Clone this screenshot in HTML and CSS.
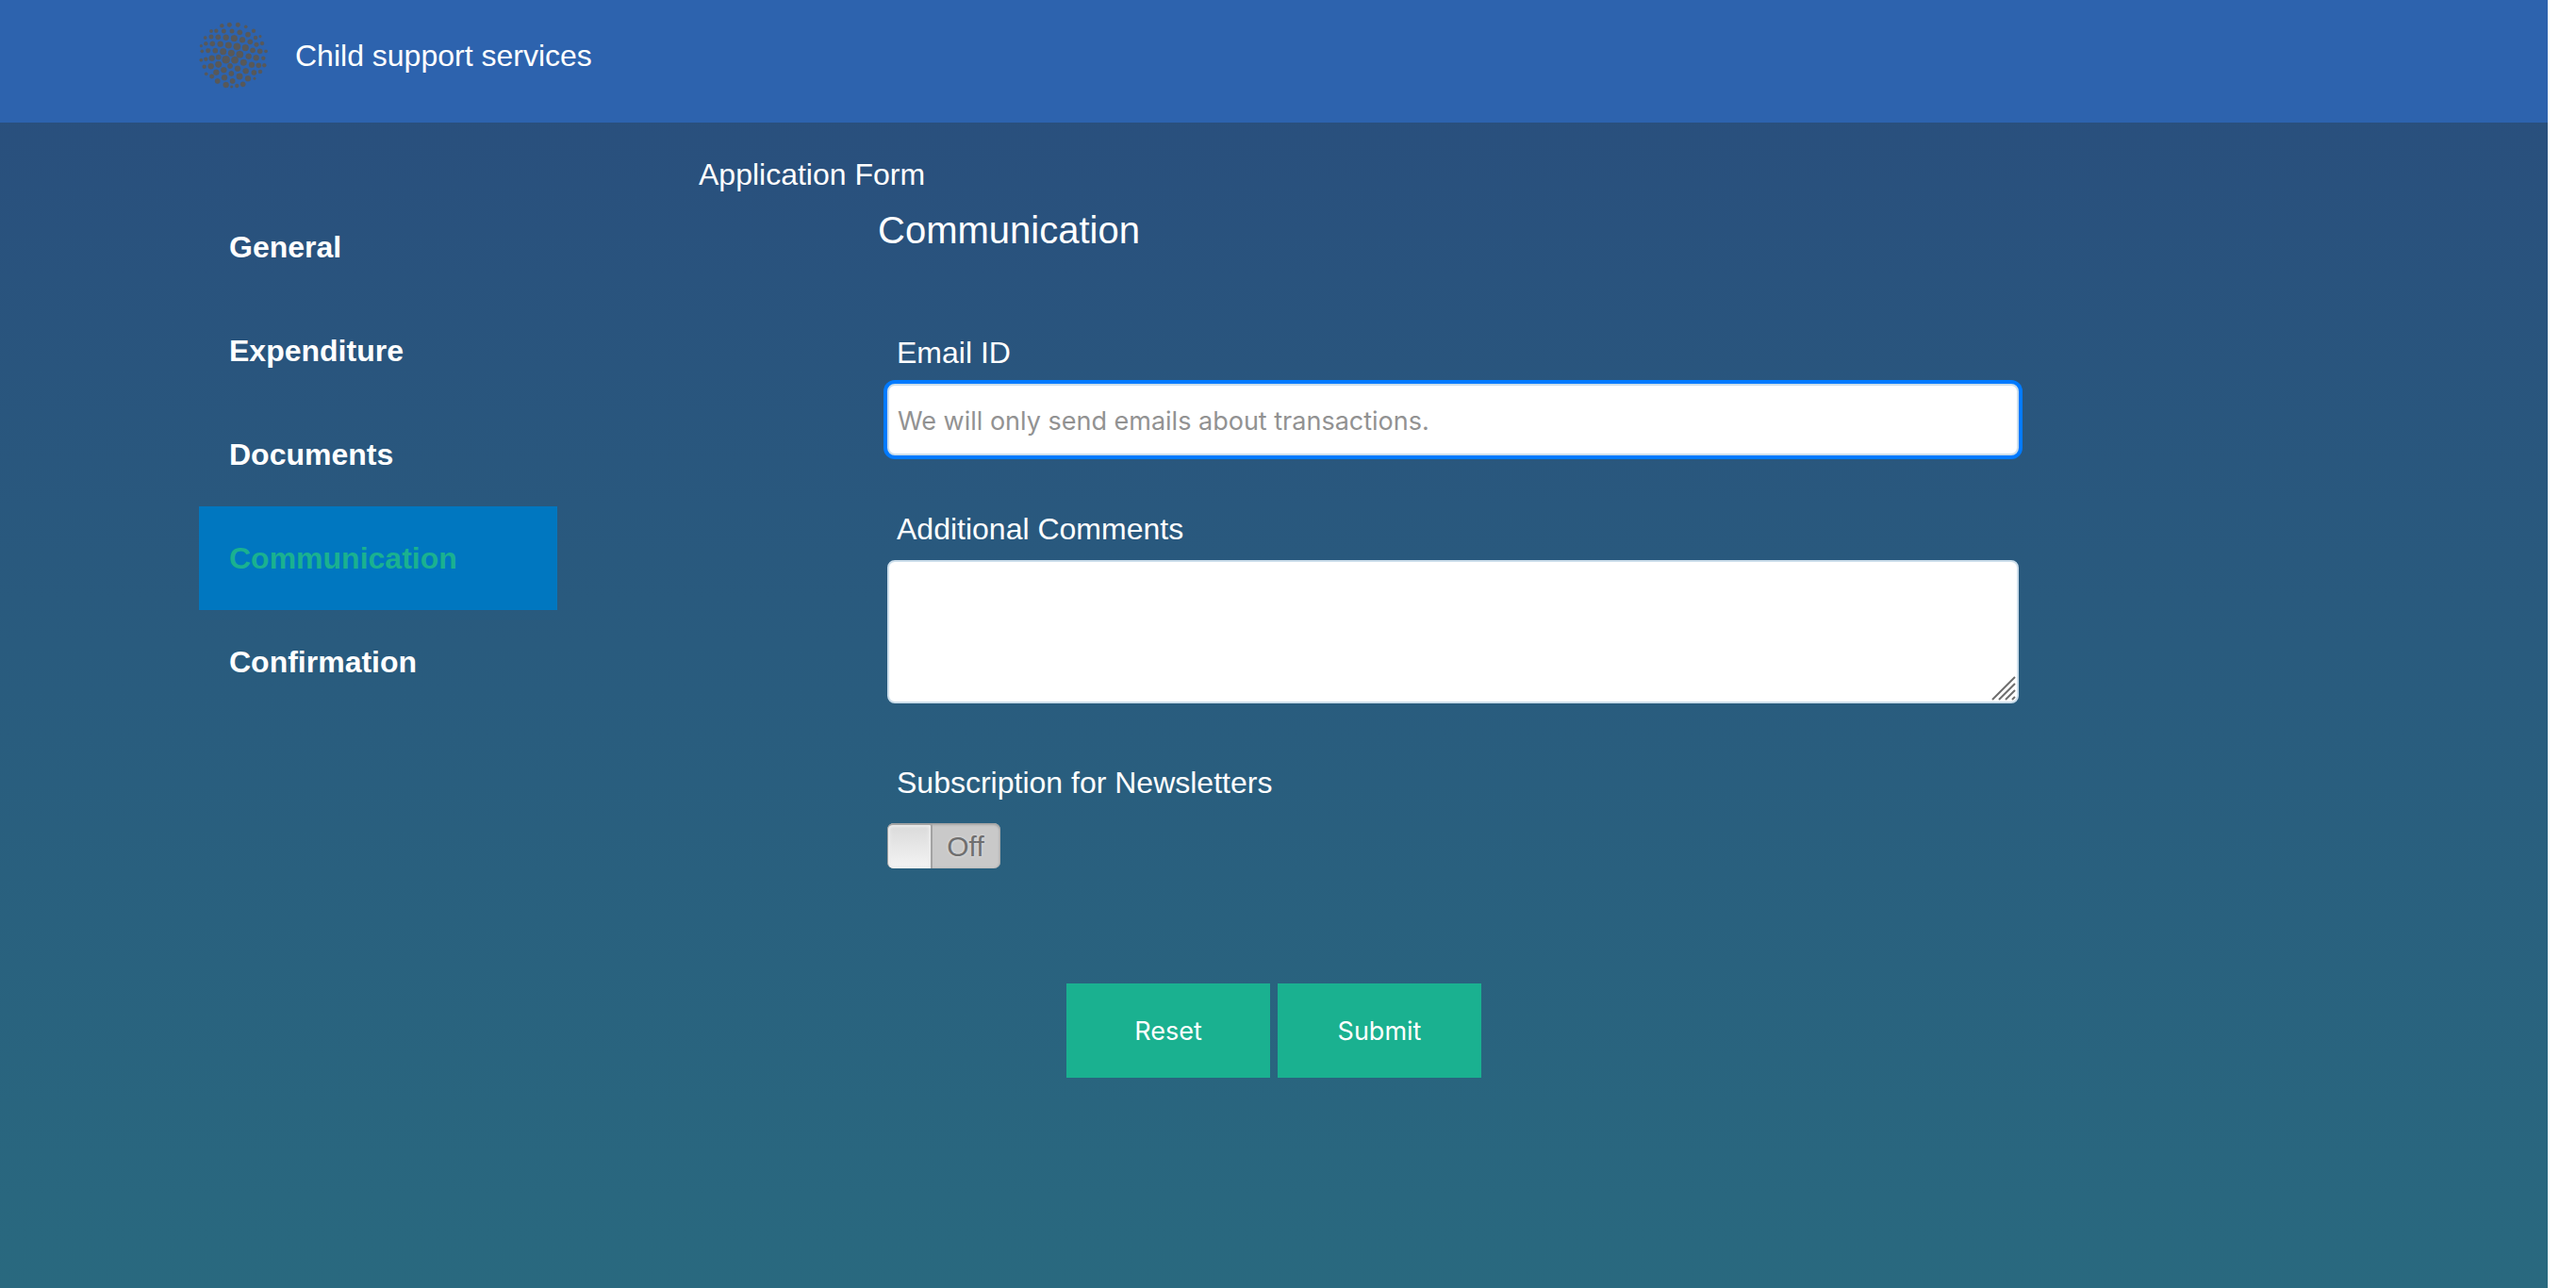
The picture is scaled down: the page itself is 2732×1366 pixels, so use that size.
FILE: index.html
```html
<!DOCTYPE html>
<html lang="en">
<head>
<meta charset="utf-8">
<title>Child support services</title>
<link rel="stylesheet" href="styles.css">
</head>
<body>
<div class="page">
  <header class="header">
    <div class="container brand">
      <svg class="logo" viewBox="33 40 219 213" aria-hidden="true">
        <g fill="#585858" stroke="#585858" stroke-width="1">
          <circle cx="106" cy="53" r="6"/><circle cx="130" cy="50" r="7"/><circle cx="157" cy="50" r="7"/><circle cx="182" cy="56" r="5"/>
          <circle cx="72" cy="70" r="5"/><circle cx="88" cy="69" r="6"/><circle cx="112" cy="70" r="7"/><circle cx="138" cy="70" r="7"/><circle cx="163" cy="74" r="8"/><circle cx="189" cy="81" r="8"/><circle cx="207" cy="69" r="6"/>
          <circle cx="53" cy="91" r="5"/><circle cx="72" cy="88" r="7"/><circle cx="94" cy="89" r="8"/><circle cx="119" cy="90" r="9"/><circle cx="145" cy="93" r="10"/><circle cx="171" cy="98" r="9"/><circle cx="213" cy="91" r="6"/><circle cx="228" cy="87" r="4"/>
          <circle cx="40" cy="117" r="4"/><circle cx="55" cy="110" r="6"/><circle cx="76" cy="110" r="8"/><circle cx="101" cy="111" r="9"/><circle cx="127" cy="115" r="10"/><circle cx="154" cy="119" r="11"/><circle cx="181" cy="123" r="10"/><circle cx="196" cy="104" r="8"/><circle cx="216" cy="113" r="7"/><circle cx="234" cy="109" r="6"/>
          <circle cx="43" cy="134" r="5"/><circle cx="62" cy="132" r="7"/><circle cx="85" cy="132" r="8"/><circle cx="110" cy="135" r="10"/><circle cx="136" cy="140" r="10"/><circle cx="163" cy="144" r="11"/><circle cx="191" cy="150" r="9"/><circle cx="204" cy="131" r="8"/><circle cx="227" cy="134" r="8"/><circle cx="246" cy="134" r="5"/>
          <circle cx="40" cy="162" r="5"/><circle cx="55" cy="159" r="6"/><circle cx="74" cy="156" r="9"/><circle cx="95" cy="153" r="8"/><circle cx="119" cy="161" r="12"/><circle cx="147" cy="162" r="11"/><circle cx="175" cy="170" r="10"/><circle cx="215" cy="155" r="9"/><circle cx="238" cy="156" r="6"/>
          <circle cx="50" cy="183" r="6"/><circle cx="71" cy="182" r="9"/><circle cx="95" cy="176" r="10"/><circle cx="132" cy="181" r="8"/><circle cx="156" cy="189" r="9"/><circle cx="201" cy="177" r="9"/><circle cx="223" cy="179" r="8"/><circle cx="241" cy="179" r="6"/>
          <circle cx="56" cy="206" r="5"/><circle cx="88" cy="201" r="9"/><circle cx="112" cy="194" r="9"/><circle cx="136" cy="205" r="8"/><circle cx="182" cy="197" r="9"/><circle cx="208" cy="202" r="8"/><circle cx="228" cy="199" r="6"/>
          <circle cx="74" cy="214" r="7"/><circle cx="114" cy="218" r="9"/><circle cx="162" cy="214" r="10"/><circle cx="189" cy="221" r="9"/><circle cx="210" cy="221" r="4"/>
          <circle cx="92" cy="229" r="8"/><circle cx="140" cy="229" r="8"/><circle cx="119" cy="241" r="9"/><circle cx="137" cy="247" r="4"/><circle cx="154" cy="244" r="6"/><circle cx="173" cy="239" r="8"/>
        </g>
      </svg>
      <span class="brand-name">Child support services</span>
    </div>
  </header>
  <main class="container">
    <div class="columns">
      <nav class="steps">
        <a class="step" href="#general">General</a>
        <a class="step" href="#expenditure">Expenditure</a>
        <a class="step" href="#documents">Documents</a>
        <a class="step step-active" href="#communication" aria-current="step">Communication</a>
        <a class="step" href="#confirmation">Confirmation</a>
      </nav>
      <form class="form" id="application">
        <div class="form-title">Application Form</div>
        <div class="section">
          <h2 class="section-title">Communication</h2>
          <div class="fields">
            <div class="field">
              <label class="label" for="email">Email ID</label>
              <input class="control control-focused" id="email" type="email" placeholder="We will only send emails about transactions.">
            </div>
            <div class="field">
              <label class="label" for="comments">Additional Comments</label>
              <div class="textarea-wrap">
                <textarea class="control control-multiline" id="comments"></textarea>
                <svg class="grip" viewBox="0 0 26 26" aria-hidden="true"><path d="M1 25 25 1M8 25 25 8M15 25 25 15M22 25 25 22" stroke="#6e6e6e" stroke-width="2"/></svg>
              </div>
            </div>
            <div class="field field-switch">
              <label class="label" for="newsletter">Subscription for Newsletters</label>
              <div class="switch">
                <input class="switch-input" id="newsletter" type="checkbox" role="switch">
                <span class="switch-handle"></span>
                <span class="switch-text">Off</span>
              </div>
            </div>
          </div>
        </div>
      </form>
    </div>
    <div class="actions">
      <button class="button" type="reset" form="application">Reset</button>
      <button class="button" type="submit" form="application">Submit</button>
    </div>
  </main>
</div>
</body>
</html>
```

FILE: styles.css
```css
* {
  box-sizing: border-box;
}

body {
  margin: 0;
  padding-right: 30px;
  background: #fff;
  color: #fff;
  font-family: "Liberation Sans", Arial, sans-serif;
  font-size: 32px;
  line-height: 46px;
}

.page {
  display: flex;
  flex-direction: column;
  min-height: 100vh;
  background: linear-gradient(#294d7d, #29697f);
}

.container {
  width: 100%;
  max-width: 2340px;
  margin: 0 auto;
  padding: 0 30px;
}

.header {
  height: 130px;
  background: #2d63ae;
}

.brand {
  display: flex;
  align-items: center;
  gap: 29px;
  height: 117px;
}

.logo {
  width: 73px;
  height: 71px;
}

.columns {
  display: grid;
  grid-template-columns: 380px 1fr;
  gap: 150px;
  padding-top: 32px;
}

.steps {
  display: flex;
  flex-direction: column;
  padding-top: 45px;
}

.step {
  padding: 32px;
  color: #fff;
  font-weight: bold;
  text-decoration: none;
}

.step-active {
  background: #0077c0;
  color: #1ab190;
}

.section {
  padding: 14px 0 0 190px;
}

.section-title {
  margin: 0;
  font-size: 40px;
  font-weight: normal;
  line-height: 44px;
}

.fields {
  display: flex;
  flex-direction: column;
  gap: 55px;
  max-width: 1210px;
  padding: 85px 0 0 10px;
}

.field {
  display: flex;
  flex-direction: column;
  gap: 10px;
}

.field-switch {
  gap: 20px;
  padding-top: 6px;
}

.label {
  padding-left: 10px;
}

.control {
  display: block;
  width: 100%;
  height: 76px;
  padding: 2px 9px 0;
  border: 2px solid #ccdeeb;
  border-radius: 8px;
  outline: none;
  background: #fff;
  color: #333;
  font: 27px/40px Inter, sans-serif;
}

.control::placeholder {
  color: #929292;
  opacity: 1;
}

.control-focused {
  box-shadow: 0 0 0 4px #007aff;
}

.control-multiline {
  height: 152px;
  padding: 10px;
  resize: none;
}

.textarea-wrap {
  position: relative;
}

.grip {
  position: absolute;
  right: 3px;
  bottom: 3px;
  width: 26px;
  height: 26px;
  pointer-events: none;
}

.switch {
  position: relative;
  display: flex;
  width: 120px;
  height: 48px;
  overflow: hidden;
  border-radius: 7px;
  background: #c9c9c9;
  box-shadow: inset 0 1px 2px 1px #a3a3a3;
}

.switch-input {
  position: absolute;
  inset: 0;
  width: 100%;
  height: 100%;
  margin: 0;
  opacity: 0;
}

.switch-handle {
  width: 48px;
  border: 2px solid #a3a3a3;
  border-width: 2px 2px 0 1px;
  border-radius: 6px 3px 0 6px;
  background: linear-gradient(#dadada, #f4f4f4);
  box-shadow: inset 0 0 3px 2px #ececec;
}

.switch-text {
  flex: 1;
  padding-right: 2px;
  color: #6f6f6f;
  font-size: 30px;
  line-height: 50px;
  text-align: center;
  text-shadow: 0 0 3px #e6e6e6;
}

.actions {
  display: flex;
  justify-content: center;
  gap: 8px;
  padding: 122px 0;
}

.button {
  width: 216px;
  height: 100px;
  padding: 2px 0 0;
  border: 0;
  background: #1ab190;
  color: #fff;
  font: 27px/40px Inter, sans-serif;
}
```
